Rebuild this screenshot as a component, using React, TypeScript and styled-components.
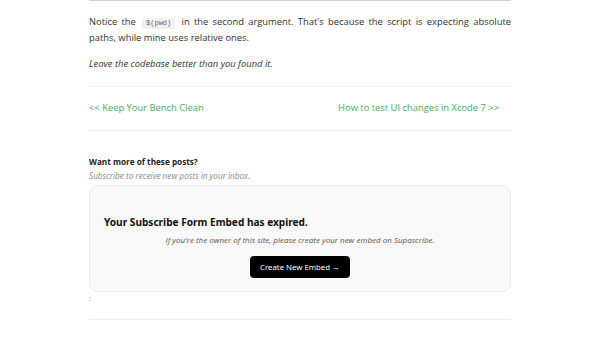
import styled, { createGlobalStyle } from "styled-components";

const GlobalStyle = createGlobalStyle`
  html, body {
    margin: 0;
    padding: 0;
    background: #ffffff;
  }
  body {
    font-family: "Open Sans", "Liberation Sans", sans-serif;
    color: #333333;
  }
`;

const Page = styled.div`
  width: 422px;
  margin: 0 auto;
`;

const TopRule = styled.div`
  height: 1px;
  background: #cfcfcf;
`;

const Paragraph = styled.p<{ $italic?: boolean }>`
  margin: ${({ $italic }) => ($italic ? "10px 0 0" : "13px 0 0")};
  font-size: 9.4px;
  line-height: 16px;
  text-align: justify;
  font-style: ${({ $italic }) => ($italic ? "italic" : "normal")};
`;

const Code = styled.code`
  display: inline-block;
  margin: 0 2px;
  font-family: "Liberation Mono", monospace;
  font-size: 7px;
  line-height: 11px;
  background: #f1f1f1;
  color: #666;
  padding: 0 4px;
  border-radius: 2px;
`;

const Divider = styled.hr<{ $gap: number }>`
  border: 0;
  border-top: 1px solid #f0f0f0;
  margin: ${({ $gap }) => $gap}px 0 0;
`;

const PostNav = styled.nav`
  display: flex;
  justify-content: space-between;
  padding-top: 13px;
  font-size: 9.4px;
  line-height: 16px;
`;

const NavLink = styled.a`
  color: #3fae63;
  text-decoration: none;
  &:last-child {
    margin-right: 12px;
  }
`;

const Subscribe = styled.section`
  margin-top: 24px;
`;

const SubTitle = styled.h4`
  margin: 0;
  font-size: 8.2px;
  font-weight: 700;
  line-height: 14px;
  color: #222;
`;

const SubHint = styled.p`
  margin: 0;
  font-size: 8.2px;
  line-height: 14px;
  font-style: italic;
  color: #8a8a8a;
`;

const EmbedCard = styled.div`
  margin-top: 2px;
  height: 107px;
  box-sizing: border-box;
  background: #f9f9f9;
  border: 1px solid #ececec;
  border-radius: 8px;
  padding: 27px 14px 0;
  display: flex;
  flex-direction: column;
`;

const EmbedTitle = styled.h3`
  margin: 0;
  font-family: "Noto Sans", "Open Sans", sans-serif;
  font-size: 10.1px;
  font-weight: 700;
  line-height: 18px;
  color: #111;
`;

const EmbedText = styled.p`
  margin: 2px 0 0;
  text-align: center;
  font-size: 8px;
  line-height: 14px;
  font-style: italic;
  color: #555;
`;

const EmbedButton = styled.button`
  align-self: center;
  margin-top: 9px;
  width: 100px;
  height: 22px;
  padding: 0;
  border: 0;
  border-radius: 4px;
  background: #000;
  color: #fff;
  font-family: "Noto Sans", "Open Sans", sans-serif;
  font-size: 7.8px;
  white-space: nowrap;
  cursor: pointer;
`;

const Colon = styled.div`
  font-size: 8px;
  line-height: 12px;
  color: #888;
`;

export default function App() {
  return (
    <>
      <GlobalStyle />
      <Page>
        <TopRule />
        <Paragraph>
          Notice the <Code>$(pwd)</Code> in the second argument. That's because
          the script is expecting absolute paths, while mine uses relative ones.
        </Paragraph>
        <Paragraph $italic>Leave the codebase better than you found it.</Paragraph>
        <Divider $gap={14} />
        <PostNav>
          <NavLink href="#">&lt;&lt; Keep Your Bench Clean</NavLink>
          <NavLink href="#">How to test UI changes in Xcode 7 &gt;&gt;</NavLink>
        </PostNav>
        <Divider $gap={14} />
        <Subscribe>
          <SubTitle>Want more of these posts?</SubTitle>
          <SubHint>Subscribe to receive new posts in your inbox.</SubHint>
          <EmbedCard>
            <EmbedTitle>Your Subscribe Form Embed has expired.</EmbedTitle>
            <EmbedText>
              If you're the owner of this site, please create your new embed on
              Supascribe.
            </EmbedText>
            <EmbedButton>Create New Embed →</EmbedButton>
          </EmbedCard>
          <Colon>:</Colon>
        </Subscribe>
        <Divider $gap={15} />
      </Page>
    </>
  );
}
